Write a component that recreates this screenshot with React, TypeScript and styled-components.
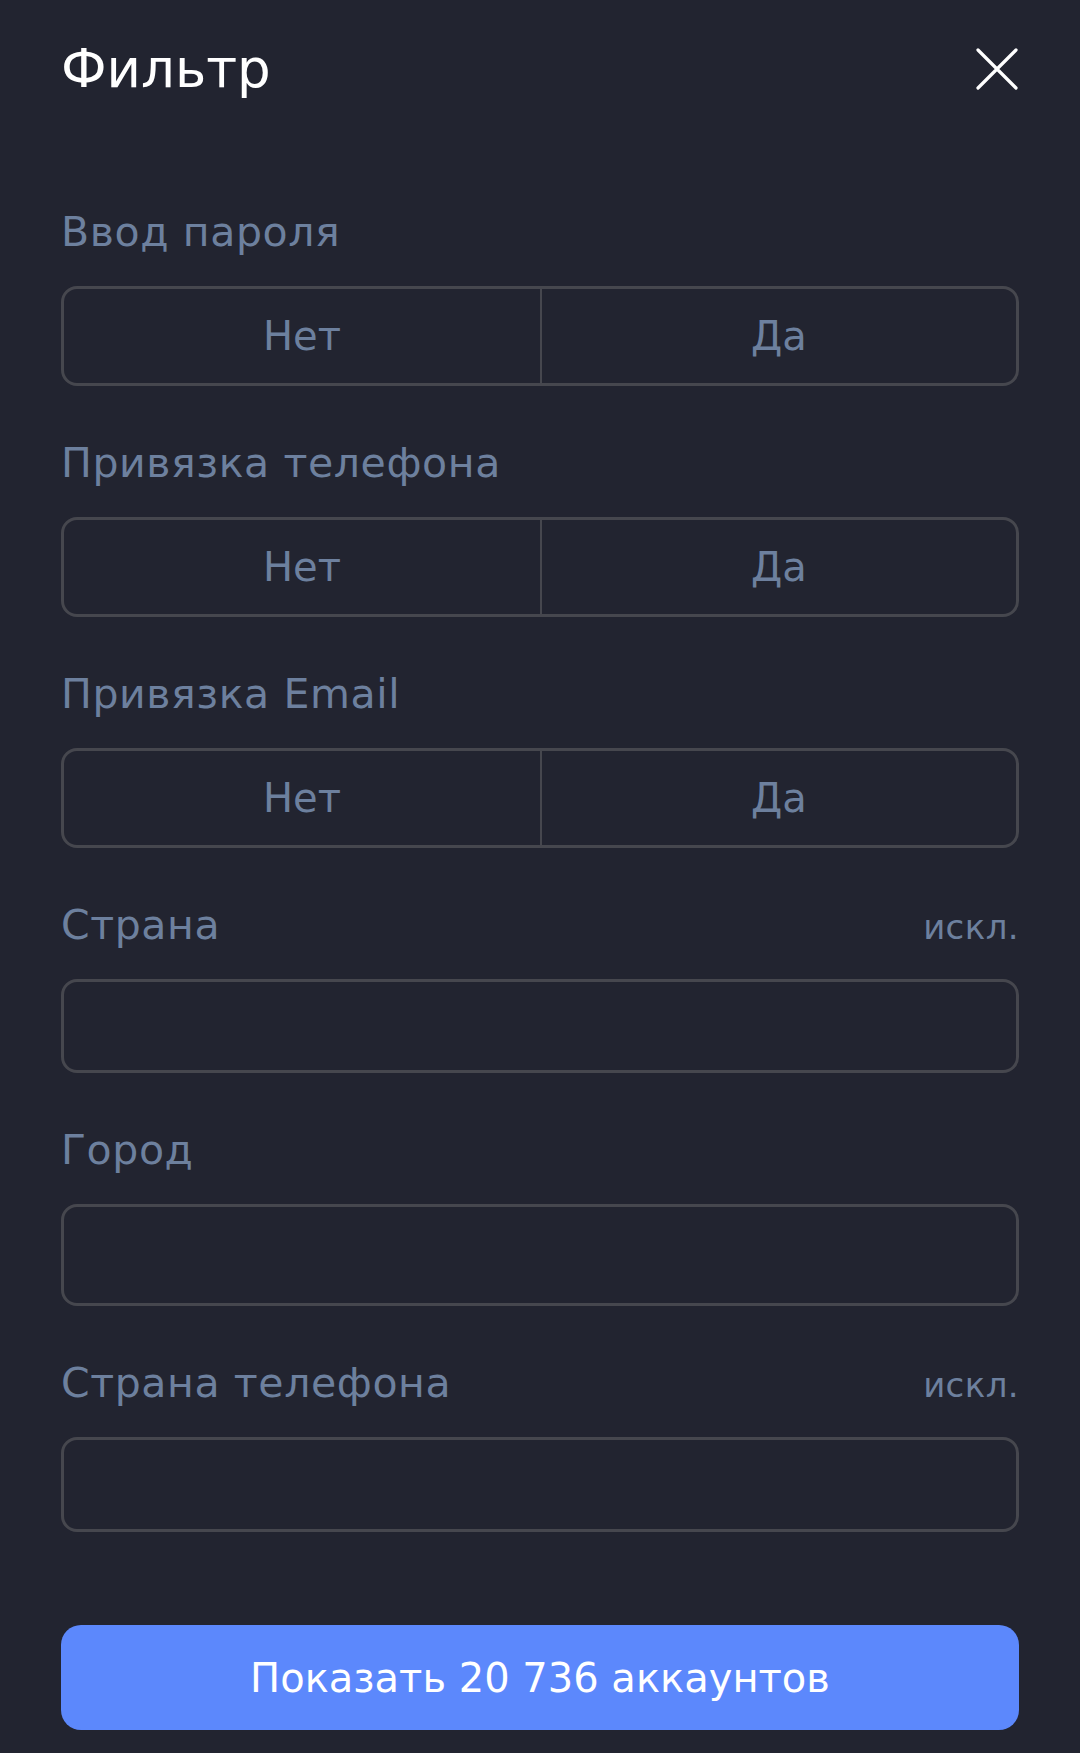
import React from 'react';
import styled, { createGlobalStyle } from 'styled-components';

const FONT = '"DejaVu Sans", "Noto Sans", sans-serif';

const GlobalStyle = createGlobalStyle`
  html, body {
    margin: 0;
    padding: 0;
    background: #222430;
  }
  body {
    font-family: ${FONT};
    -webkit-font-smoothing: antialiased;
  }
`;

type Choice = { label: string; kind: 'toggle' } | { label: string; kind: 'input'; height: number; exclude?: boolean };

const fields: Choice[] = [
  { label: 'Ввод пароля', kind: 'toggle' },
  { label: 'Привязка телефона', kind: 'toggle' },
  { label: 'Привязка Email', kind: 'toggle' },
  { label: 'Страна', kind: 'input', height: 94, exclude: true },
  { label: 'Город', kind: 'input', height: 102 },
  { label: 'Страна телефона', kind: 'input', height: 95, exclude: true },
];

const App = () => {
  return (
    <>
      <GlobalStyle />
      <Sheet>
        <Header>
          <Title>Фильтр</Title>
          <CloseButton aria-label="Закрыть">
            <svg width="42" height="42" viewBox="0 0 42 42" fill="none">
              <path d="M2 2L40 40M40 2L2 40" stroke="#ffffff" strokeWidth="3.2" strokeLinecap="round" />
            </svg>
          </CloseButton>
        </Header>

        <Fields>
          {fields.map((f) => (
            <Field key={f.label}>
              <LabelRow>
                <Label>{f.label}</Label>
                {f.kind === 'input' && f.exclude && <Exclude>искл.</Exclude>}
              </LabelRow>
              {f.kind === 'toggle' ? (
                <Segmented>
                  <Segment>Нет</Segment>
                  <Segment $divider>Да</Segment>
                </Segmented>
              ) : (
                <TextBox $height={f.height} />
              )}
            </Field>
          ))}
        </Fields>

        <SubmitButton type="button">Показать 20 736 аккаунтов</SubmitButton>
      </Sheet>
    </>
  );
};

export default App;

const Sheet = styled.div`
  width: 1080px;
  min-height: 1753px;
  box-sizing: border-box;
  padding: 30px 61px 22px;
  background: #222430;
  display: flex;
  flex-direction: column;
`;

const Header = styled.div`
  height: 78px;
  display: flex;
  align-items: center;
  justify-content: space-between;
  margin-bottom: 104px;
`;

const Title = styled.h1`
  margin: 0;
  font-family: ${FONT};
  font-size: 53px;
  line-height: 78px;
  font-weight: 500;
  color: #ffffff;
`;

const CloseButton = styled.button`
  width: 42px;
  height: 42px;
  margin-right: 1px;
  padding: 0;
  border: none;
  background: transparent;
  display: flex;
  align-items: center;
  justify-content: center;
  cursor: pointer;
`;

const Fields = styled.div`
  display: flex;
  flex-direction: column;
  gap: 57px;
`;

const Field = styled.div`
  display: flex;
  flex-direction: column;
  gap: 34px;
`;

const LabelRow = styled.div`
  height: 40px;
  display: flex;
  align-items: baseline;
  justify-content: space-between;
`;

const Label = styled.span`
  font-size: 41px;
  line-height: 40px;
  letter-spacing: 0.6px;
  color: #6d809e;
`;

const Exclude = styled.span`
  font-size: 34px;
  line-height: 40px;
  letter-spacing: 0.4px;
  color: #6d809e;
`;

const Segmented = styled.div`
  height: 100px;
  box-sizing: border-box;
  border: 3px solid #46474e;
  border-radius: 16px;
  display: grid;
  grid-template-columns: 1fr 1fr;
  overflow: hidden;
`;

const Segment = styled.button<{ $divider?: boolean }>`
  border: none;
  border-left: ${(p) => (p.$divider ? '2px solid #46474e' : 'none')};
  background: transparent;
  font-family: ${FONT};
  font-size: 40px;
  color: #6d809e;
  display: flex;
  align-items: center;
  justify-content: center;
  padding: 0;
  cursor: pointer;
`;

const TextBox = styled.div<{ $height: number }>`
  height: ${(p) => p.$height}px;
  box-sizing: border-box;
  border: 3px solid #46474e;
  border-radius: 16px;
`;

const SubmitButton = styled.button`
  margin-top: 93px;
  height: 105px;
  border: none;
  border-radius: 20px;
  background: #5c88fc;
  color: #ffffff;
  font-family: ${FONT};
  font-size: 40px;
  font-weight: 500;
  cursor: pointer;
`;
